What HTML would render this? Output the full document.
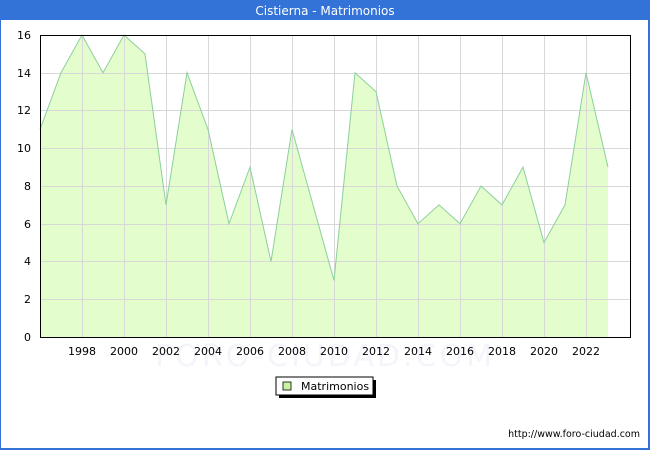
<!DOCTYPE html>
<html><head><style>
body{margin:0;width:650px;height:450px;overflow:hidden;background:#fff;font-family:"DejaVu Sans","Liberation Sans",sans-serif}
</style></head><body>
<svg width="650" height="450" xmlns="http://www.w3.org/2000/svg" font-family="DejaVu Sans, Liberation Sans, sans-serif">
<rect x="0" y="0" width="650" height="450" fill="#3372d6"/>
<rect x="1" y="20" width="647" height="428" fill="#fff"/>
<text x="325" y="15" fill="#fff" font-size="12" text-anchor="middle">Cistierna - Matrimonios</text>
<text x="325" y="366" font-size="30" fill="#f3f5fb" text-anchor="middle" letter-spacing="3">FORO-CIUDAD.COM</text>
<polygon fill="#e4fdcc" points="40,337 40,129.4 61,72.75 82,35 103,72.75 124,35 145,53.9 166,204.9 187,72.75 208,129.4 229,223.75 250,167.1 271,261.5 292,129.4 313,204.9 334,280.4 355,72.75 376,91.6 397,186 418,223.75 439,204.9 460,223.75 481,186 502,204.9 523,167.1 544,242.6 565,204.9 586,72.75 608,167.1 608,337"/>
<g stroke="#d8d8d8" stroke-width="1">
<line x1="40" y1="299.5" x2="630" y2="299.5"/><line x1="40" y1="261.5" x2="630" y2="261.5"/>
<line x1="40" y1="224.5" x2="630" y2="224.5"/><line x1="40" y1="186.5" x2="630" y2="186.5"/>
<line x1="40" y1="148.5" x2="630" y2="148.5"/><line x1="40" y1="110.5" x2="630" y2="110.5"/>
<line x1="40" y1="73.5" x2="630" y2="73.5"/>
<line x1="82.5" y1="35" x2="82.5" y2="337"/><line x1="124.5" y1="35" x2="124.5" y2="337"/>
<line x1="166.5" y1="35" x2="166.5" y2="337"/><line x1="208.5" y1="35" x2="208.5" y2="337"/>
<line x1="250.5" y1="35" x2="250.5" y2="337"/><line x1="292.5" y1="35" x2="292.5" y2="337"/>
<line x1="334.5" y1="35" x2="334.5" y2="337"/><line x1="376.5" y1="35" x2="376.5" y2="337"/>
<line x1="418.5" y1="35" x2="418.5" y2="337"/><line x1="460.5" y1="35" x2="460.5" y2="337"/>
<line x1="502.5" y1="35" x2="502.5" y2="337"/><line x1="544.5" y1="35" x2="544.5" y2="337"/>
<line x1="586.5" y1="35" x2="586.5" y2="337"/>
</g>
<polyline fill="none" stroke="#8ccf9c" stroke-width="1" points="40,129.4 61,72.75 82,35 103,72.75 124,35 145,53.9 166,204.9 187,72.75 208,129.4 229,223.75 250,167.1 271,261.5 292,129.4 313,204.9 334,280.4 355,72.75 376,91.6 397,186 418,223.75 439,204.9 460,223.75 481,186 502,204.9 523,167.1 544,242.6 565,204.9 586,72.75 608,167.1"/>
<rect x="40.5" y="35.5" width="590" height="302" fill="none" stroke="#000" stroke-width="1"/>
<g font-size="11" fill="#000" text-anchor="end">
<text x="31" y="341">0</text><text x="31" y="303">2</text><text x="31" y="265">4</text><text x="31" y="228">6</text>
<text x="31" y="190">8</text><text x="31" y="152">10</text><text x="31" y="114">12</text><text x="31" y="77">14</text><text x="31" y="39">16</text>
</g>
<g font-size="11" fill="#000" text-anchor="middle">
<text x="82" y="355">1998</text><text x="124" y="355">2000</text><text x="166" y="355">2002</text><text x="208" y="355">2004</text>
<text x="250" y="355">2006</text><text x="292" y="355">2008</text><text x="334" y="355">2010</text><text x="376" y="355">2012</text>
<text x="418" y="355">2014</text><text x="460" y="355">2016</text><text x="502" y="355">2018</text><text x="544" y="355">2020</text>
<text x="586" y="355">2022</text>
</g>
<rect x="279" y="380" width="97" height="18" fill="#000"/>
<rect x="276" y="377" width="97" height="18" fill="#fff" stroke="#000" stroke-width="1"/>
<rect x="283" y="382" width="8" height="8" fill="#c8f4a0" stroke="#000" stroke-width="0.8"/>
<text x="301" y="390" font-size="11" fill="#000">Matrimonios</text>
<text x="640" y="437" font-size="9.5" fill="#000" text-anchor="end">http://www.foro-ciudad.com</text>
</svg>
</body></html>
